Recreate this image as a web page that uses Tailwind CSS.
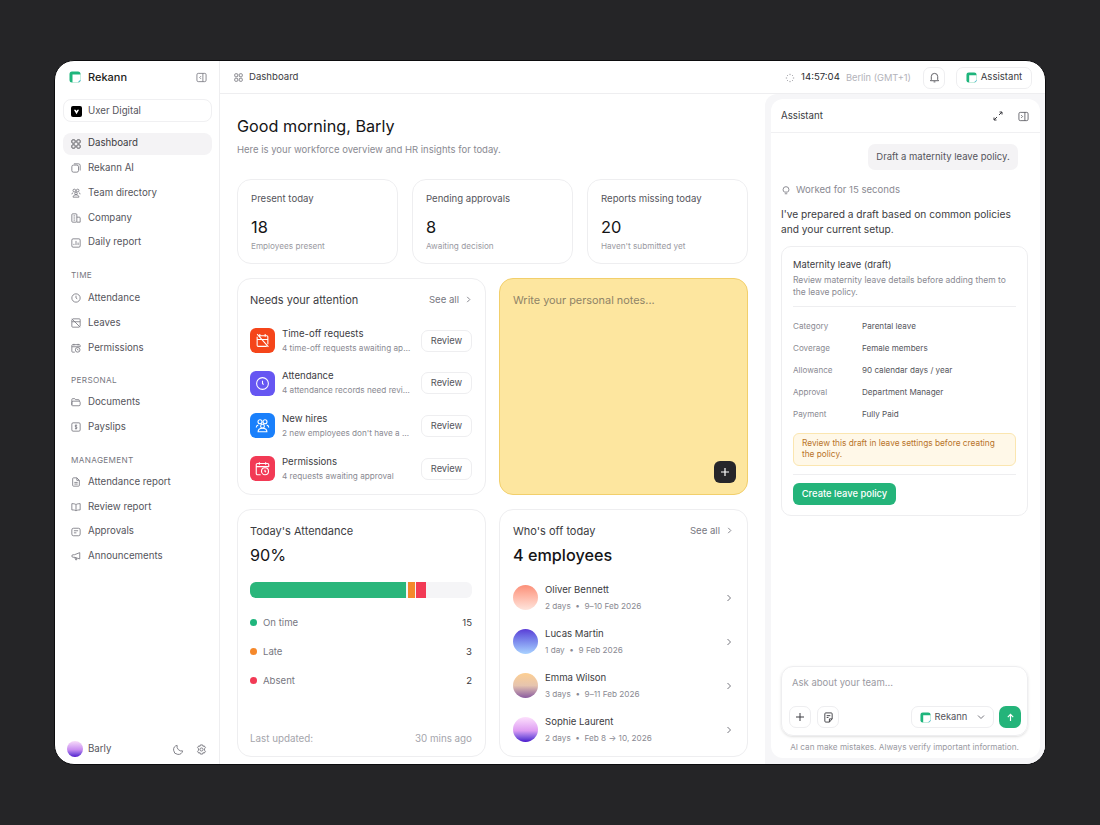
<!DOCTYPE html>
<html lang="en">
<head>
  <meta charset="UTF-8" />
  <title>Rekann Dashboard</title>
  <script src="https://cdn.jsdelivr.net/npm/@tailwindcss/browser@4"></script>
</head>
<body class="bg-[#252527] font-[Inter,sans-serif] overflow-hidden">
  <div class="w-[1100px] h-[825px] pl-[54px] pt-[60px]">
    <div class="w-[992px] h-[705px] bg-white border border-[#0c0c0e] rounded-[20px] overflow-hidden flex">

      <!-- sidebar -->
      <aside class="w-[165px] shrink-0 border-r border-[#eeeef0] flex flex-col pl-2 pr-[7px] text-[9.7px] text-[#55555c]">
        <div class="h-[32px] flex items-center justify-between pl-[6px] pr-[5px]">
          <div class="flex items-center gap-[7px] text-[#1d1d20] font-medium text-[11px]">
            <svg class="w-[12px] h-[12px]" viewBox="0 0 12 12"><rect x="0.5" y="0.5" width="11" height="11" rx="2.5" fill="#1fb57c"/><path d="M3.5 3.500h8v5.500L9 11.500H3.500z" fill="#fff"/><path d="M9.500 11l2-2" stroke="#6fc3e8"/></svg>
            Rekann
          </div>
          <svg class="w-[11px] h-[11px] text-[#77777f]" viewBox="0 0 12 12" fill="none" stroke="currentColor" stroke-width="0.9"><rect x="1" y="1.5" width="10" height="9" rx="1.5"/><path d="M7.5 1.5v9M5.5 4.5 4 6l1.5 1.5"/></svg>
        </div>
        <div class="mt-[6px] h-[23px] border border-[#f0f0f2] rounded-[8px] flex items-center gap-[6px] pt-px pl-[7px] mb-[10.5px]">
          <span class="w-[11px] h-[11px] rounded-[2px] bg-black flex items-center justify-center"><svg class="w-[7px] h-[7px]" viewBox="0 0 8 8"><path d="M1 2h2l1 1.4L5 2h2L4 7z" fill="#fff"/></svg></span>
          Uxer Digital
        </div>

        <nav class="flex flex-col">
          <a class="h-[22px] mb-[2.8px] rounded-[8px] bg-[#f4f3f5] flex items-center gap-[7px] pl-[8px] text-[#3c3c42]"><svg class="w-[10px] h-[10px]" viewBox="0 0 12 12" fill="none" stroke="currentColor"><rect x="1" y="1" width="4" height="4" rx="1"/><rect x="7" y="1" width="4" height="4" rx="1"/><rect x="1" y="7" width="4" height="4" rx="1"/><rect x="7" y="7" width="4" height="4" rx="1"/></svg>Dashboard</a>
          <a class="h-[22px] mb-[2.8px] flex items-center gap-[7px] pl-[8px]"><svg class="w-[10px] h-[10px]" viewBox="0 0 12 12" fill="none" stroke="#77777f"><rect x="1" y="2.5" width="8" height="8.5" rx="2"/><path d="M3.5 1h5.5a2 2 0 0 1 2 2v6"/></svg>Rekann AI</a>
          <a class="h-[22px] mb-[2.8px] flex items-center gap-[7px] pl-[8px]"><svg class="w-[10px] h-[10px]" viewBox="0 0 12 12" fill="none" stroke="#77777f"><circle cx="4" cy="3" r="1.6"/><circle cx="8" cy="3" r="1.6"/><circle cx="6" cy="6.5" r="1.5"/><path d="M2.5 11c0-2 1.5-2.8 3.5-2.8s3.5.8 3.5 2.8zM1 7.5c0-1 .6-1.6 1.6-1.8M11 7.5c0-1-.6-1.6-1.6-1.8"/></svg>Team directory</a>
          <a class="h-[22px] mb-[2.8px] flex items-center gap-[7px] pl-[8px]"><svg class="w-[10px] h-[10px]" viewBox="0 0 12 12" fill="none" stroke="#77777f"><rect x="1" y="1" width="6" height="10" rx="1"/><path d="M7 5h3a1 1 0 0 1 1 1v5H7M3 3.5h2M3 6h2M3 8.5h2"/></svg>Company</a>
          <a class="h-[22px] flex items-center gap-[7px] pl-[8px]"><svg class="w-[10px] h-[10px]" viewBox="0 0 12 12" fill="none" stroke="#77777f"><rect x="1" y="1" width="10" height="10" rx="1.5"/><path d="M3.5 8.5V7M6 8.5v-5M8.500 8.500V5.500"/></svg>Daily report</a>
        </nav>

        <p class="mt-[15.5px] ml-[8px] h-[22px] text-[8.2px] tracking-[0.04em] text-[#77777f]">TIME</p>
        <nav class="flex flex-col -mt-[4px]">
          <a class="h-[22px] mb-[2.8px] flex items-center gap-[7px] pl-[8px]"><svg class="w-[10px] h-[10px]" viewBox="0 0 12 12" fill="none" stroke="#77777f"><circle cx="6" cy="6" r="5"/><path d="M6 3.200V6l1.500 1"/></svg>Attendance</a>
          <a class="h-[22px] mb-[2.8px] flex items-center gap-[7px] pl-[8px]"><svg class="w-[10px] h-[10px]" viewBox="0 0 12 12" fill="none" stroke="#77777f"><path d="M1 1l10 10M2 1h8a1 1 0 0 1 1 1v8M10 11H2a1 1 0 0 1-1-1V2M1 4.500h10"/></svg>Leaves</a>
          <a class="h-[22px] flex items-center gap-[7px] pl-[8px]"><svg class="w-[10px] h-[10px]" viewBox="0 0 12 12" fill="none" stroke="#77777f"><path d="M4.500 11H2a1 1 0 0 1-1-1V3a1 1 0 0 1 1-1h8a1 1 0 0 1 1 1v1.500M1 4.500h10M3.500 1v2M8.500 1v2"/><circle cx="8" cy="8.200" r="2.800"/><path d="M8 7v1.300l.8.500"/></svg>Permissions</a>
        </nav>

        <p class="mt-[15px] ml-[8px] h-[22px] text-[8.2px] tracking-[0.04em] text-[#77777f]">PERSONAL</p>
        <nav class="flex flex-col -mt-[4.5px]">
          <a class="h-[22px] mb-[2.8px] flex items-center gap-[7px] pl-[8px]"><svg class="w-[10px] h-[10px]" viewBox="0 0 12 12" fill="none" stroke="#77777f"><path d="M1 9.500V3a1 1 0 0 1 1-1h2.500l1 1.200H9a1 1 0 0 1 1 1V5M1.500 10.500h8A1.500 1.500 0 0 0 11 9V6.500A1.500 1.500 0 0 0 9.500 5h-7A1.500 1.500 0 0 0 1 6.500V9.500a1 1 0 0 0 .5 1z"/></svg>Documents</a>
          <a class="h-[22px] flex items-center gap-[7px] pl-[8px]"><svg class="w-[10px] h-[10px]" viewBox="0 0 12 12" fill="none" stroke="#77777f"><rect x="1" y="1" width="10" height="10" rx="1.500"/><path d="M7.200 4.500C7 4 6.500 3.800 6 3.800c-.7 0-1.200.4-1.200 1 0 1.300 2.400.8 2.400 2.200 0 .6-.5 1-1.200 1-.6 0-1-.2-1.300-.7M6 3v6"/></svg>Payslips</a>
        </nav>

        <p class="mt-[15.5px] ml-[8px] h-[22px] text-[8.2px] tracking-[0.04em] text-[#77777f]">MANAGEMENT</p>
        <nav class="flex flex-col -mt-[4.5px]">
          <a class="h-[22px] mb-[2.8px] flex items-center gap-[7px] pl-[8px]"><svg class="w-[10px] h-[10px]" viewBox="0 0 12 12" fill="none" stroke="#77777f"><path d="M2 2a1 1 0 0 1 1-1h4l3 3v6a1 1 0 0 1-1 1H3a1 1 0 0 1-1-1zM7 1v3h3M4 6.500h4M4 8.500h4"/></svg>Attendance report</a>
          <a class="h-[22px] mb-[2.8px] flex items-center gap-[7px] pl-[8px]"><svg class="w-[10px] h-[10px]" viewBox="0 0 12 12" fill="none" stroke="#77777f"><path d="M6 3.200C5 2.300 3.500 2 1 2v7.500c2.500 0 4 .3 5 1.200 1-.9 2.500-1.200 5-1.200V2c-2.500 0-4 .3-5 1.200zM6 3.200v7.500"/></svg>Review report</a>
          <a class="h-[22px] mb-[2.8px] flex items-center gap-[7px] pl-[8px]"><svg class="w-[10px] h-[10px]" viewBox="0 0 12 12" fill="none" stroke="#77777f"><rect x="1" y="1.500" width="10" height="9" rx="2"/><path d="M3.500 4.500h5M3.500 7h3"/></svg>Approvals</a>
          <a class="h-[22px] flex items-center gap-[7px] pl-[8px]"><svg class="w-[10px] h-[10px]" viewBox="0 0 12 12" fill="none" stroke="#77777f"><path d="M10.500 2v7.500L4 7.500H2.500a1.500 1.500 0 0 1 0-3H4zM4.500 7.500 5.500 10.500H7L6 8"/></svg>Announcements</a>
        </nav>

        <div class="mt-auto h-[30px] flex items-center pl-1 pr-[5px]">
          <span class="w-[16px] h-[16px] rounded-full bg-linear-to-b from-[#f8dcf8] via-[#c88cf0] via-55% to-[#5208cc]"></span>
          <span class="ml-[5px]">Barly</span>
          <svg class="ml-auto w-[11px] h-[11px]" viewBox="0 0 12 12" fill="none" stroke="#77777f"><path d="M10.500 7.500A5 5 0 0 1 4.500 1.500a5 5 0 1 0 6 6z"/></svg>
          <svg class="ml-[12px] w-[11px] h-[11px]" viewBox="0 0 12 12" fill="none" stroke="#77777f"><path d="M4.800 1h2.400l.4 1.500 1.500-.4 1.200 2L9.200 5.200v1.600l1.100 1.100-1.200 2-1.500-.4L7.200 11H4.800l-.4-1.500-1.500.4-1.200-2 1.100-1.100V5.200L1.700 4.100l1.200-2 1.500.4z"/><circle cx="6" cy="6" r="1.700"/></svg>
        </div>
      </aside>

      <!-- main -->
      <div class="flex-1 flex flex-col min-w-0">
        <header class="h-[33px] shrink-0 border-b border-[#eeeef0] flex items-center pt-px pl-[14px] pr-[13px] text-[9.6px] text-[#3c3c42]">
          <svg class="w-[9px] h-[9px] text-[#66666d] mr-[6px]" viewBox="0 0 12 12" fill="none" stroke="currentColor"><rect x="1" y="1" width="4" height="4" rx="1"/><rect x="7" y="1" width="4" height="4" rx="1"/><rect x="1" y="7" width="4" height="4" rx="1"/><rect x="7" y="7" width="4" height="4" rx="1"/></svg>
          Dashboard
          <svg class="ml-auto w-[10px] h-[10px] mr-[6px]" viewBox="0 0 12 12" fill="none" stroke="#8a8a92"><path d="M6 1v1.500M6 9.500V11M1 6h1.500M9.500 6H11M2.500 2.500l1 1M8.500 8.500l1 1M2.500 9.500l1-1M8.500 3.500l1-1"/></svg>
          <span class="text-[#2c2c31]">14:57:04</span>
          <span class="ml-[6px] text-[#b3b3ba] text-[9.3px]">Berlin (GMT+1)</span>
          <span class="ml-[12px] w-[22px] h-[22px] rounded-[7px] border border-[#eeeef0] flex items-center justify-center"><svg class="w-[11px] h-[11px]" viewBox="0 0 12 12" fill="none" stroke="#55555c"><path d="M2.500 8.500V5a3.500 3.500 0 0 1 7 0v3.500l1 1h-9zM5 10.800h2"/></svg></span>
          <span class="ml-[11px] h-[22px] w-[76px] rounded-[7px] border border-[#eeeef0] flex items-center justify-center gap-[4px]">
            <svg class="w-[11px] h-[11px]" viewBox="0 0 12 12"><rect x="0.500" y="0.500" width="11" height="11" rx="2.500" fill="#1fb57c"/><path d="M3.500 3.500h8v5.500L9 11.500H3.500z" fill="#fff"/><path d="M9.500 11l2-2" stroke="#6fc3e8"/></svg>
            Assistant
          </span>
        </header>

        <div class="flex-1 flex min-h-0">
          <!-- left pane -->
          <main class="w-[545px] shrink-0 pl-[17px] pr-[17px] overflow-hidden">
            <h1 class="mt-[21px] text-[16.2px] leading-[22px] text-[#141416]">Good morning, Barly</h1>
            <p class="mt-[6px] text-[9.5px] leading-[14px] text-[#8a8a92]">Here is your workforce overview and HR insights for today.</p>

            <div class="mt-[22px] grid grid-cols-3 gap-[14px]">
              <div class="h-[85px] border border-[#eeeef0] rounded-[14px] pl-[13px] pr-[14px] pt-[12px]">
                <p class="text-[9.6px] leading-[14px] text-[#55555c]">Present today</p>
                <p class="mt-[10px] text-[16.4px] leading-[22px] text-[#141416]">18</p>
                <p class="mt-[1px] text-[8.2px] leading-[14px] text-[#9a9aa2]">Employees present</p>
              </div>
              <div class="h-[85px] border border-[#eeeef0] rounded-[14px] pl-[13px] pr-[14px] pt-[12px]">
                <p class="text-[9.6px] leading-[14px] text-[#55555c]">Pending approvals</p>
                <p class="mt-[10px] text-[16.4px] leading-[22px] text-[#141416]">8</p>
                <p class="mt-[1px] text-[8.2px] leading-[14px] text-[#9a9aa2]">Awaiting decision</p>
              </div>
              <div class="h-[85px] border border-[#eeeef0] rounded-[14px] pl-[13px] pr-[14px] pt-[12px]">
                <p class="text-[9.6px] leading-[14px] text-[#55555c]">Reports missing today</p>
                <p class="mt-[10px] text-[16.4px] leading-[22px] text-[#141416]">20</p>
                <p class="mt-[1px] text-[8.2px] leading-[14px] text-[#9a9aa2]">Haven't submitted yet</p>
              </div>
            </div>

            <div class="mt-[14px] grid grid-cols-2 gap-[13px]">
              <section class="h-[217px] border border-[#eeeef0] rounded-[14px] pl-[12px] pr-[13px] pt-[13px]">
                <div class="flex items-center justify-between text-[#3c3c42]">
                  <h2 class="text-[11px] leading-[16px]">Needs your attention</h2>
                  <span class="flex items-center gap-[6px] text-[9.6px] text-[#77777f]">See all <svg class="w-[7px] h-[7px]" viewBox="0 0 8 8" fill="none" stroke="#77777f"><path d="M2.500 1l3 3-3 3"/></svg></span>
                </div>
                <div class="mt-[20px] flex flex-col gap-[17.7px]">
                  <div class="flex items-center h-[25px]">
                    <span class="w-[25px] h-[25px] shrink-0 rounded-[6px] bg-[#f5451a] flex items-center justify-center"><svg class="w-[15px] h-[15px]" viewBox="0 0 14 14" fill="none" stroke="#fff"><path d="M2 1l10.500 12M3 2.500h8a1 1 0 0 1 1 1v7M11 12.500H3a1 1 0 0 1-1-1v-8M2 6h10M4.500 1v2.500M9.500 1v2.500"/></svg></span>
                    <div class="ml-[7px] w-[130px] min-w-0">
                      <p class="text-[9.6px] leading-[14px] text-[#3c3c42]">Time-off requests</p>
                      <p class="mt-[1px] truncate text-[8.2px] leading-[13px] text-[#8a8a92]">4 time-off requests awaiting approval</p>
                    </div>
                    <button class="ml-auto w-[51px] h-[22px] border border-[#eeeef0] rounded-[7px] text-[9.3px] text-[#55555c]">Review</button>
                  </div>
                  <div class="flex items-center h-[25px]">
                    <span class="w-[25px] h-[25px] shrink-0 rounded-[6px] bg-[#6656f2] flex items-center justify-center"><svg class="w-[15px] h-[15px]" viewBox="0 0 14 14" fill="none" stroke="#fff"><circle cx="7" cy="7" r="5.500"/><path d="M7 4.500V7l1 1"/></svg></span>
                    <div class="ml-[7px] w-[130px] min-w-0">
                      <p class="text-[9.6px] leading-[14px] text-[#3c3c42]">Attendance</p>
                      <p class="mt-[1px] truncate text-[8.2px] leading-[13px] text-[#8a8a92]">4 attendance records need review today</p>
                    </div>
                    <button class="ml-auto w-[51px] h-[22px] border border-[#eeeef0] rounded-[7px] text-[9.3px] text-[#55555c]">Review</button>
                  </div>
                  <div class="flex items-center h-[25px]">
                    <span class="w-[25px] h-[25px] shrink-0 rounded-[6px] bg-[#1a80fb] flex items-center justify-center"><svg class="w-[15px] h-[15px]" viewBox="0 0 12 12" fill="none" stroke="#fff" stroke-width="0.900"><circle cx="4" cy="3" r="1.600"/><circle cx="8" cy="3" r="1.600"/><circle cx="6" cy="6.500" r="1.500"/><path d="M2.500 11c0-2 1.500-2.800 3.500-2.800s3.500.8 3.500 2.800zM1 7.500c0-1 .6-1.600 1.600-1.800M11 7.500c0-1-.6-1.600-1.600-1.800"/></svg></span>
                    <div class="ml-[7px] w-[130px] min-w-0">
                      <p class="text-[9.6px] leading-[14px] text-[#3c3c42]">New hires</p>
                      <p class="mt-[1px] truncate text-[8.2px] leading-[13px] text-[#8a8a92]">2 new employees don't have a account</p>
                    </div>
                    <button class="ml-auto w-[51px] h-[22px] border border-[#eeeef0] rounded-[7px] text-[9.3px] text-[#55555c]">Review</button>
                  </div>
                  <div class="flex items-center h-[25px]">
                    <span class="w-[25px] h-[25px] shrink-0 rounded-[6px] bg-[#f23a55] flex items-center justify-center"><svg class="w-[15px] h-[15px]" viewBox="0 0 12 12" fill="none" stroke="#fff" stroke-width="0.900"><path d="M4.500 11H2a1 1 0 0 1-1-1V3a1 1 0 0 1 1-1h8a1 1 0 0 1 1 1v1.500M1 4.500h10M3.500 1v2M8.500 1v2"/><circle cx="8" cy="8.200" r="2.800"/><path d="M8 7v1.300l.8.500"/></svg></span>
                    <div class="ml-[7px] w-[130px] min-w-0">
                      <p class="text-[9.6px] leading-[14px] text-[#3c3c42]">Permissions</p>
                      <p class="mt-[1px] truncate text-[8.2px] leading-[13px] text-[#8a8a92]">4 requests awaiting approval</p>
                    </div>
                    <button class="ml-auto w-[51px] h-[22px] border border-[#eeeef0] rounded-[7px] text-[9.3px] text-[#55555c]">Review</button>
                  </div>
                </div>
              </section>

              <section class="relative h-[217px] bg-[#fde69f] border border-[#f2cf6b] rounded-[14px] px-[13px] pt-[13px]">
                <p class="text-[10.9px] leading-[16px] text-[#8f8467]">Write your personal notes...</p>
                <span class="absolute right-[11px] bottom-[11px] w-[22px] h-[22px] rounded-[6px] bg-[#26262a] flex items-center justify-center"><svg class="w-[10px] h-[10px]" viewBox="0 0 10 10" fill="none" stroke="#fff" stroke-width="1.200"><path d="M5 1v8M1 5h8"/></svg></span>
              </section>
            </div>

            <div class="mt-[14px] grid grid-cols-2 gap-[13px]">
              <section class="h-[248px] border border-[#eeeef0] rounded-[14px] pl-[12px] pr-[13px] pt-[13px] flex flex-col">
                <h2 class="text-[11px] leading-[16px] text-[#3c3c42]">Today's Attendance</h2>
                <p class="mt-[5px] text-[16.2px] leading-[22px] text-[#141416]">90%</p>
                <div class="mt-[16px] h-[16px] rounded-[6px] bg-[#f5f5f7] flex overflow-hidden">
                  <span class="w-[156px] bg-[#2ab67b]"></span>
                  <span class="ml-[2px] w-[7px] bg-[#f5882b]"></span>
                  <span class="ml-px w-[10px] bg-[#f23a55]"></span>
                </div>
                <div class="mt-[17.5px] flex flex-col gap-[15px] text-[9.6px] leading-[14px] text-[#77777f]">
                  <div class="flex items-center"><span class="w-[7px] h-[7px] rounded-full bg-[#1fb57c] mr-[6px]"></span>On time<span class="ml-auto text-[#3c3c42]">15</span></div>
                  <div class="flex items-center"><span class="w-[7px] h-[7px] rounded-full bg-[#f5882b] mr-[6px]"></span>Late<span class="ml-auto text-[#3c3c42]">3</span></div>
                  <div class="flex items-center"><span class="w-[7px] h-[7px] rounded-full bg-[#f23a55] mr-[6px]"></span>Absent<span class="ml-auto text-[#3c3c42]">2</span></div>
                </div>
                <div class="mt-auto mb-[10px] flex justify-between text-[9.8px] leading-[14px] text-[#a5a5ac]"><span>Last updated:</span><span>30 mins ago</span></div>
              </section>

              <section class="h-[248px] border border-[#eeeef0] rounded-[14px] pl-[13px] pr-[14px] pt-[13px]">
                <div class="flex items-center justify-between">
                  <h2 class="text-[11px] leading-[16px] text-[#3c3c42]">Who's off today</h2>
                  <span class="flex items-center gap-[6px] text-[9.6px] text-[#77777f]">See all <svg class="w-[7px] h-[7px]" viewBox="0 0 8 8" fill="none" stroke="#77777f"><path d="M2.500 1l3 3-3 3"/></svg></span>
                </div>
                <p class="mt-[5px] text-[16.2px] leading-[22px] font-medium text-[#141416]">4 employees</p>
                <div class="mt-[19px] flex flex-col gap-[19px]">
                  <div class="flex items-center h-[25px]">
                    <span class="w-[25px] h-[25px] rounded-full bg-linear-to-b from-[#fb8f78] to-[#fde4dc]"></span>
                    <div class="ml-[7px]"><p class="text-[9.6px] leading-[14px] text-[#3c3c42]">Oliver Bennett</p><p class="mt-[3px] text-[8.2px] leading-[13px] text-[#8a8a92]">2 days &nbsp;•&nbsp; 9–10 Feb 2026</p></div>
                    <svg class="ml-auto w-[8px] h-[8px]" viewBox="0 0 8 8" fill="none" stroke="#77777f"><path d="M2.500 1l3 3-3 3"/></svg>
                  </div>
                  <div class="flex items-center h-[25px]">
                    <span class="w-[25px] h-[25px] rounded-full bg-linear-to-b from-[#5b3bd6] to-[#a9d2ff]"></span>
                    <div class="ml-[7px]"><p class="text-[9.6px] leading-[14px] text-[#3c3c42]">Lucas Martin</p><p class="mt-[3px] text-[8.2px] leading-[13px] text-[#8a8a92]">1 day &nbsp;•&nbsp; 9 Feb 2026</p></div>
                    <svg class="ml-auto w-[8px] h-[8px]" viewBox="0 0 8 8" fill="none" stroke="#77777f"><path d="M2.500 1l3 3-3 3"/></svg>
                  </div>
                  <div class="flex items-center h-[25px]">
                    <span class="w-[25px] h-[25px] rounded-full bg-linear-to-b from-[#fdcf92] via-[#e6c4ae] to-[#8a5a9e]"></span>
                    <div class="ml-[7px]"><p class="text-[9.6px] leading-[14px] text-[#3c3c42]">Emma Wilson</p><p class="mt-[3px] text-[8.2px] leading-[13px] text-[#8a8a92]">3 days &nbsp;•&nbsp; 9–11 Feb 2026</p></div>
                    <svg class="ml-auto w-[8px] h-[8px]" viewBox="0 0 8 8" fill="none" stroke="#77777f"><path d="M2.500 1l3 3-3 3"/></svg>
                  </div>
                  <div class="flex items-center h-[25px]">
                    <span class="w-[25px] h-[25px] rounded-full bg-linear-to-b from-[#fde0fc] via-[#dd9cf2] via-55% to-[#4a08cc]"></span>
                    <div class="ml-[7px]"><p class="text-[9.6px] leading-[14px] text-[#3c3c42]">Sophie Laurent</p><p class="mt-[3px] text-[8.2px] leading-[13px] text-[#8a8a92]">2 days &nbsp;•&nbsp; Feb 8 → 10, 2026</p></div>
                    <svg class="ml-auto w-[8px] h-[8px]" viewBox="0 0 8 8" fill="none" stroke="#77777f"><path d="M2.500 1l3 3-3 3"/></svg>
                  </div>
                </div>
              </section>
            </div>
          </main>

          <!-- assistant -->
          <div class="flex-1 bg-[#f6f6f8] rounded-tl-[12px] pl-[6px] pr-[5px] pt-[5px] pb-[6px] min-w-0">
            <div class="h-full bg-white rounded-[12px] flex flex-col">
              <div class="h-[34px] shrink-0 border-b border-[#f0f0f2] flex items-center pt-px pl-[10px] pr-[11px] text-[9.7px] text-[#3c3c42]">
                Assistant
                <svg class="ml-auto w-[10px] h-[10px]" viewBox="0 0 10 10" fill="none" stroke="#3c3c42"><path d="M6 4l3-3M6.500 1H9v2.500M4 6 1 9M1 6.500V9h2.500"/></svg>
                <svg class="ml-[15px] w-[11px] h-[11px]" viewBox="0 0 12 12" fill="none" stroke="#55555c" stroke-width="0.900"><rect x="1" y="1.500" width="10" height="9" rx="1.500"/><path d="M7.500 1.500v9M3.500 4.500 5 6 3.500 7.500"/></svg>
              </div>
              <div class="pl-[10px] pr-[12px] flex-1 flex flex-col min-h-0">
                <div class="mt-[11px] self-end w-[150px] h-[26px] mr-[10px] rounded-[7px] bg-[#f4f3f5] flex items-center justify-center text-[9.5px] text-[#55555c]">Draft a maternity leave policy.</div>
                <p class="mt-[13px] flex items-center gap-[5px] text-[9.6px] leading-[14px] text-[#8a8a92]"><svg class="w-[10px] h-[10px]" viewBox="0 0 12 12" fill="none" stroke="#77777f"><path d="M4 8.500C3 7.800 2.500 6.800 2.500 5.500a3.500 3.500 0 0 1 7 0c0 1.300-.5 2.300-1.500 3zM4.500 10.500h3"/></svg>Worked for 15 seconds</p>
                <p class="mt-[10px] text-[10.2px] leading-[15px] text-[#3c3c42]">I've prepared a draft based on common policies and your current setup.</p>
                <div class="mt-[9px] h-[270px] border border-[#eeeef0] rounded-[10px] px-[11px] pt-[11px]">
                  <h3 class="text-[9.4px] leading-[14px] text-[#3c3c42]">Maternity leave (draft)</h3>
                  <p class="mt-[2px] text-[8.5px] leading-[12px] text-[#8a8a92]">Review maternity leave details before adding them to the leave policy.</p>
                  <div class="mt-[8px] border-t border-[#eeeef0] pt-[13px] grid grid-cols-[69px_1fr] gap-y-[10px] text-[8.1px] leading-[12px] text-[#55555c]">
                    <span class="text-[#8a8a92]">Category</span><span>Parental leave</span>
                    <span class="text-[#8a8a92]">Coverage</span><span>Female members</span>
                    <span class="text-[#8a8a92]">Allowance</span><span>90 calendar days / year</span>
                    <span class="text-[#8a8a92]">Approval</span><span>Department Manager</span>
                    <span class="text-[#8a8a92]">Payment</span><span>Fully Paid</span>
                  </div>
                  <div class="mt-[13px] h-[33px] rounded-[6px] border border-[#fbe6b0] bg-[#fff8e8] px-[8px] pt-[4px] text-[8.3px] leading-[11px] text-[#b8742a]">Review this draft in leave settings before creating the policy.</div>
                  <div class="mt-[8px] border-t border-[#eeeef0] pt-[8px]">
                    <button class="block w-[103px] h-[22px] rounded-[6px] bg-[#24b47a] text-white text-[9.4px] font-medium">Create leave policy</button>
                  </div>
                </div>
                <div class="mt-auto h-[70px] border border-[#eeeef0] rounded-[12px] shadow-sm pl-[7px] pr-[6px] flex flex-col">
                  <p class="mt-[9px] ml-[3px] text-[9.5px] leading-[14px] text-[#9a9aa2]">Ask about your team...</p>
                  <div class="mt-auto mb-[7px] flex items-center">
                    <span class="w-[22px] h-[22px] border border-[#eeeef0] rounded-[7px] flex items-center justify-center"><svg class="w-[10px] h-[10px]" viewBox="0 0 10 10" fill="none" stroke="#3c3c42"><path d="M5 1v8M1 5h8"/></svg></span>
                    <span class="ml-[6px] w-[22px] h-[22px] border border-[#eeeef0] rounded-[7px] flex items-center justify-center"><svg class="w-[11px] h-[11px]" viewBox="0 0 12 12" fill="none" stroke="#3c3c42"><path d="M10 7.500V2a1 1 0 0 0-1-1H3a1 1 0 0 0-1 1v8a1 1 0 0 0 1 1h4zM7 11V7.500h3M4 4h4M4 6h2"/></svg></span>
                    <span class="ml-auto w-[83px] h-[22px] border border-[#eeeef0] rounded-[7px] flex items-center justify-center gap-[4px] text-[9.4px] text-[#55555c]">
                      <svg class="w-[11px] h-[11px]" viewBox="0 0 12 12"><rect x="0.500" y="0.500" width="11" height="11" rx="2.500" fill="#1fb57c"/><path d="M3.500 3.500h8v5.500L9 11.500H3.500z" fill="#fff"/><path d="M9.500 11l2-2" stroke="#6fc3e8"/></svg>
                      Rekann
                      <svg class="ml-[6px] w-[8px] h-[8px]" viewBox="0 0 8 8" fill="none" stroke="#77777f"><path d="M1 2.500l3 3 3-3"/></svg>
                    </span>
                    <span class="ml-[5px] w-[22px] h-[22px] rounded-[7px] bg-[#24b47a] flex items-center justify-center"><svg class="w-[9px] h-[9px]" viewBox="0 0 10 10" fill="none" stroke="#fff" stroke-width="1.300"><path d="M5 9V1.500M2 4.500l3-3 3 3"/></svg></span>
                  </div>
                </div>
                <p class="mt-[5px] mb-[5px] text-center text-[8.2px] leading-[12px] text-[#9a9aa2]">AI can make mistakes. Always verify important information.</p>
              </div>
            </div>
          </div>
        </div>
      </div>
    </div>
  </div>
</body>
</html>
